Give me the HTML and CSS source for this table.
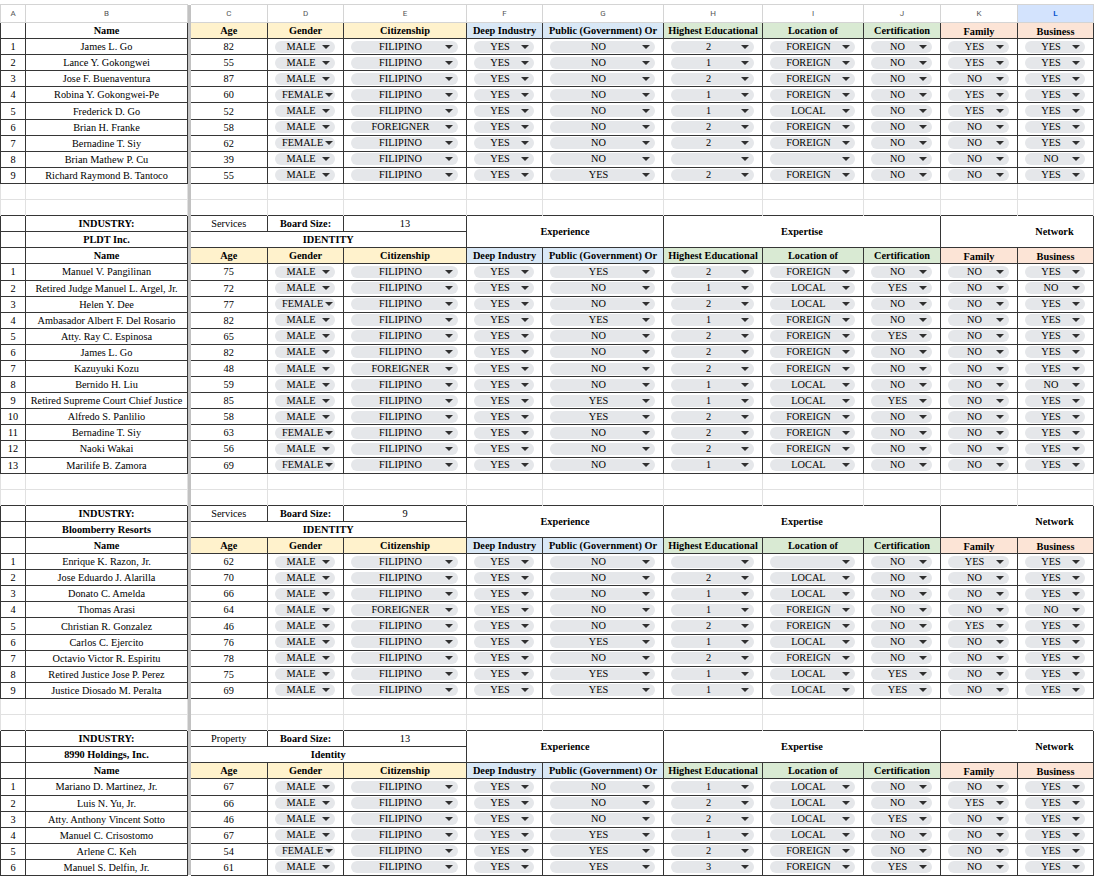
FILE: index.html
```html
<!DOCTYPE html>
<html>
<head>
<meta charset="utf-8">
<title>Board Composition</title>
<link rel="stylesheet" href="styles.css">
</head>
<body>
<table class="sheet">
<colgroup>
<col class="w-a"><col class="w-b"><col class="w-fz"><col class="w-c"><col class="w-d"><col class="w-e"><col class="w-f"><col class="w-g"><col class="w-h"><col class="w-i"><col class="w-j"><col class="w-k"><col class="w-l">
</colgroup>
<thead>
<tr class="letters"><th>A</th><th>B</th><th class="fz"></th><th>C</th><th>D</th><th>E</th><th>F</th><th>G</th><th>H</th><th>I</th><th>J</th><th>K</th><th class="sel">L</th></tr>
</thead>
<tbody>
<tr class="hd"><td></td><td class="b">Name</td><td class="fz"></td><td class="y">Age</td><td class="y">Gender</td><td class="y">Citizenship</td><td class="bl">Deep Industry</td><td class="bl">Public (Government) Or</td><td class="g">Highest Educational</td><td class="g">Location of</td><td class="g">Certification</td><td class="o">Family</td><td class="o">Business</td></tr>
<tr><td>1</td><td>James L. Go</td><td class="fz"></td><td>82</td><td><p>MALE</p></td><td><p>FILIPINO</p></td><td><p>YES</p></td><td><p>NO</p></td><td><p>2</p></td><td><p>FOREIGN</p></td><td><p>NO</p></td><td><p>YES</p></td><td><p>YES</p></td></tr>
<tr><td>2</td><td>Lance Y. Gokongwei</td><td class="fz"></td><td>55</td><td><p>MALE</p></td><td><p>FILIPINO</p></td><td><p>YES</p></td><td><p>NO</p></td><td><p>1</p></td><td><p>FOREIGN</p></td><td><p>NO</p></td><td><p>YES</p></td><td><p>YES</p></td></tr>
<tr><td>3</td><td>Jose F. Buenaventura</td><td class="fz"></td><td>87</td><td><p>MALE</p></td><td><p>FILIPINO</p></td><td><p>YES</p></td><td><p>NO</p></td><td><p>2</p></td><td><p>FOREIGN</p></td><td><p>NO</p></td><td><p>NO</p></td><td><p>YES</p></td></tr>
<tr><td>4</td><td>Robina Y. Gokongwei-Pe</td><td class="fz"></td><td>60</td><td><p>FEMALE</p></td><td><p>FILIPINO</p></td><td><p>YES</p></td><td><p>NO</p></td><td><p>1</p></td><td><p>FOREIGN</p></td><td><p>NO</p></td><td><p>YES</p></td><td><p>YES</p></td></tr>
<tr><td>5</td><td>Frederick D. Go</td><td class="fz"></td><td>52</td><td><p>MALE</p></td><td><p>FILIPINO</p></td><td><p>YES</p></td><td><p>NO</p></td><td><p>1</p></td><td><p>LOCAL</p></td><td><p>NO</p></td><td><p>YES</p></td><td><p>YES</p></td></tr>
<tr><td>6</td><td>Brian H. Franke</td><td class="fz"></td><td>58</td><td><p>MALE</p></td><td><p>FOREIGNER</p></td><td><p>YES</p></td><td><p>NO</p></td><td><p>2</p></td><td><p>FOREIGN</p></td><td><p>NO</p></td><td><p>NO</p></td><td><p>YES</p></td></tr>
<tr><td>7</td><td>Bernadine T. Siy</td><td class="fz"></td><td>62</td><td><p>FEMALE</p></td><td><p>FILIPINO</p></td><td><p>YES</p></td><td><p>NO</p></td><td><p>2</p></td><td><p>FOREIGN</p></td><td><p>NO</p></td><td><p>NO</p></td><td><p>YES</p></td></tr>
<tr><td>8</td><td>Brian Mathew P. Cu</td><td class="fz"></td><td>39</td><td><p>MALE</p></td><td><p>FILIPINO</p></td><td><p>YES</p></td><td><p>NO</p></td><td><p></p></td><td><p></p></td><td><p>NO</p></td><td><p>NO</p></td><td><p>NO</p></td></tr>
<tr><td>9</td><td>Richard Raymond B. Tantoco</td><td class="fz"></td><td>55</td><td><p>MALE</p></td><td><p>FILIPINO</p></td><td><p>YES</p></td><td><p>YES</p></td><td><p>2</p></td><td><p>FOREIGN</p></td><td><p>NO</p></td><td><p>NO</p></td><td><p>YES</p></td></tr>
<tr class="gap gap1"><td></td><td></td><td class="fz"></td><td></td><td></td><td></td><td></td><td></td><td></td><td></td><td></td><td></td><td></td></tr>
<tr class="gap gap2"><td></td><td></td><td class="fz"></td><td></td><td></td><td></td><td></td><td></td><td></td><td></td><td></td><td></td><td></td></tr>

<tr><td></td><td class="b">INDUSTRY:</td><td class="fz"></td><td>Services</td><td class="b">Board Size:</td><td>13</td><td class="b" colspan="2" rowspan="2">Experience</td><td class="b" colspan="3" rowspan="2">Expertise</td><td class="b net" colspan="2" rowspan="2">Network</td></tr>
<tr><td></td><td class="b">PLDT Inc.</td><td class="fz"></td><td class="b" colspan="3">IDENTITY</td></tr>
<tr class="hd"><td></td><td class="b">Name</td><td class="fz"></td><td class="y">Age</td><td class="y">Gender</td><td class="y">Citizenship</td><td class="bl">Deep Industry</td><td class="bl">Public (Government) Or</td><td class="g">Highest Educational</td><td class="g">Location of</td><td class="g">Certification</td><td class="o">Family</td><td class="o">Business</td></tr>
<tr><td>1</td><td>Manuel V. Pangilinan</td><td class="fz"></td><td>75</td><td><p>MALE</p></td><td><p>FILIPINO</p></td><td><p>YES</p></td><td><p>YES</p></td><td><p>2</p></td><td><p>FOREIGN</p></td><td><p>NO</p></td><td><p>NO</p></td><td><p>YES</p></td></tr>
<tr><td>2</td><td>Retired Judge Manuel L. Argel, Jr.</td><td class="fz"></td><td>72</td><td><p>MALE</p></td><td><p>FILIPINO</p></td><td><p>YES</p></td><td><p>NO</p></td><td><p>1</p></td><td><p>LOCAL</p></td><td><p>YES</p></td><td><p>NO</p></td><td><p>NO</p></td></tr>
<tr><td>3</td><td>Helen Y. Dee</td><td class="fz"></td><td>77</td><td><p>FEMALE</p></td><td><p>FILIPINO</p></td><td><p>YES</p></td><td><p>NO</p></td><td><p>2</p></td><td><p>LOCAL</p></td><td><p>NO</p></td><td><p>NO</p></td><td><p>YES</p></td></tr>
<tr><td>4</td><td>Ambasador Albert F. Del Rosario</td><td class="fz"></td><td>82</td><td><p>MALE</p></td><td><p>FILIPINO</p></td><td><p>YES</p></td><td><p>YES</p></td><td><p>1</p></td><td><p>FOREIGN</p></td><td><p>NO</p></td><td><p>NO</p></td><td><p>YES</p></td></tr>
<tr><td>5</td><td>Atty. Ray C. Espinosa</td><td class="fz"></td><td>65</td><td><p>MALE</p></td><td><p>FILIPINO</p></td><td><p>YES</p></td><td><p>NO</p></td><td><p>2</p></td><td><p>FOREIGN</p></td><td><p>YES</p></td><td><p>NO</p></td><td><p>YES</p></td></tr>
<tr><td>6</td><td>James L. Go</td><td class="fz"></td><td>82</td><td><p>MALE</p></td><td><p>FILIPINO</p></td><td><p>YES</p></td><td><p>NO</p></td><td><p>2</p></td><td><p>FOREIGN</p></td><td><p>NO</p></td><td><p>NO</p></td><td><p>YES</p></td></tr>
<tr><td>7</td><td>Kazuyuki Kozu</td><td class="fz"></td><td>48</td><td><p>MALE</p></td><td><p>FOREIGNER</p></td><td><p>YES</p></td><td><p>NO</p></td><td><p>2</p></td><td><p>FOREIGN</p></td><td><p>NO</p></td><td><p>NO</p></td><td><p>YES</p></td></tr>
<tr><td>8</td><td>Bernido H. Liu</td><td class="fz"></td><td>59</td><td><p>MALE</p></td><td><p>FILIPINO</p></td><td><p>YES</p></td><td><p>NO</p></td><td><p>1</p></td><td><p>LOCAL</p></td><td><p>NO</p></td><td><p>NO</p></td><td><p>NO</p></td></tr>
<tr><td>9</td><td>Retired Supreme Court Chief Justice</td><td class="fz"></td><td>85</td><td><p>MALE</p></td><td><p>FILIPINO</p></td><td><p>YES</p></td><td><p>YES</p></td><td><p>1</p></td><td><p>LOCAL</p></td><td><p>YES</p></td><td><p>NO</p></td><td><p>YES</p></td></tr>
<tr><td>10</td><td>Alfredo S. Panlilio</td><td class="fz"></td><td>58</td><td><p>MALE</p></td><td><p>FILIPINO</p></td><td><p>YES</p></td><td><p>YES</p></td><td><p>2</p></td><td><p>FOREIGN</p></td><td><p>NO</p></td><td><p>NO</p></td><td><p>YES</p></td></tr>
<tr><td>11</td><td>Bernadine T. Siy</td><td class="fz"></td><td>63</td><td><p>FEMALE</p></td><td><p>FILIPINO</p></td><td><p>YES</p></td><td><p>NO</p></td><td><p>2</p></td><td><p>FOREIGN</p></td><td><p>NO</p></td><td><p>NO</p></td><td><p>YES</p></td></tr>
<tr><td>12</td><td>Naoki Wakai</td><td class="fz"></td><td>56</td><td><p>MALE</p></td><td><p>FILIPINO</p></td><td><p>YES</p></td><td><p>NO</p></td><td><p>2</p></td><td><p>FOREIGN</p></td><td><p>NO</p></td><td><p>NO</p></td><td><p>YES</p></td></tr>
<tr><td>13</td><td>Marilife B. Zamora</td><td class="fz"></td><td>69</td><td><p>FEMALE</p></td><td><p>FILIPINO</p></td><td><p>YES</p></td><td><p>NO</p></td><td><p>1</p></td><td><p>LOCAL</p></td><td><p>NO</p></td><td><p>NO</p></td><td><p>YES</p></td></tr>
<tr class="gap gap1"><td></td><td></td><td class="fz"></td><td></td><td></td><td></td><td></td><td></td><td></td><td></td><td></td><td></td><td></td></tr>
<tr class="gap gap2"><td></td><td></td><td class="fz"></td><td></td><td></td><td></td><td></td><td></td><td></td><td></td><td></td><td></td><td></td></tr>

<tr><td></td><td class="b">INDUSTRY:</td><td class="fz"></td><td>Services</td><td class="b">Board Size:</td><td>9</td><td class="b" colspan="2" rowspan="2">Experience</td><td class="b" colspan="3" rowspan="2">Expertise</td><td class="b net" colspan="2" rowspan="2">Network</td></tr>
<tr><td></td><td class="b">Bloomberry Resorts</td><td class="fz"></td><td class="b" colspan="3">IDENTITY</td></tr>
<tr class="hd"><td></td><td class="b">Name</td><td class="fz"></td><td class="y">Age</td><td class="y">Gender</td><td class="y">Citizenship</td><td class="bl">Deep Industry</td><td class="bl">Public (Government) Or</td><td class="g">Highest Educational</td><td class="g">Location of</td><td class="g">Certification</td><td class="o">Family</td><td class="o">Business</td></tr>
<tr><td>1</td><td>Enrique K. Razon, Jr.</td><td class="fz"></td><td>62</td><td><p>MALE</p></td><td><p>FILIPINO</p></td><td><p>YES</p></td><td><p>NO</p></td><td><p></p></td><td><p></p></td><td><p>NO</p></td><td><p>YES</p></td><td><p>YES</p></td></tr>
<tr><td>2</td><td>Jose Eduardo J. Alarilla</td><td class="fz"></td><td>70</td><td><p>MALE</p></td><td><p>FILIPINO</p></td><td><p>YES</p></td><td><p>NO</p></td><td><p>2</p></td><td><p>LOCAL</p></td><td><p>NO</p></td><td><p>NO</p></td><td><p>YES</p></td></tr>
<tr><td>3</td><td>Donato C. Amelda</td><td class="fz"></td><td>66</td><td><p>MALE</p></td><td><p>FILIPINO</p></td><td><p>YES</p></td><td><p>NO</p></td><td><p>1</p></td><td><p>LOCAL</p></td><td><p>NO</p></td><td><p>NO</p></td><td><p>YES</p></td></tr>
<tr><td>4</td><td>Thomas Arasi</td><td class="fz"></td><td>64</td><td><p>MALE</p></td><td><p>FOREIGNER</p></td><td><p>YES</p></td><td><p>NO</p></td><td><p>1</p></td><td><p>FOREIGN</p></td><td><p>NO</p></td><td><p>NO</p></td><td><p>NO</p></td></tr>
<tr><td>5</td><td>Christian R. Gonzalez</td><td class="fz"></td><td>46</td><td><p>MALE</p></td><td><p>FILIPINO</p></td><td><p>YES</p></td><td><p>NO</p></td><td><p>2</p></td><td><p>FOREIGN</p></td><td><p>NO</p></td><td><p>YES</p></td><td><p>YES</p></td></tr>
<tr><td>6</td><td>Carlos C. Ejercito</td><td class="fz"></td><td>76</td><td><p>MALE</p></td><td><p>FILIPINO</p></td><td><p>YES</p></td><td><p>YES</p></td><td><p>1</p></td><td><p>LOCAL</p></td><td><p>NO</p></td><td><p>NO</p></td><td><p>YES</p></td></tr>
<tr><td>7</td><td>Octavio Victor R. Espiritu</td><td class="fz"></td><td>78</td><td><p>MALE</p></td><td><p>FILIPINO</p></td><td><p>YES</p></td><td><p>NO</p></td><td><p>2</p></td><td><p>FOREIGN</p></td><td><p>NO</p></td><td><p>NO</p></td><td><p>YES</p></td></tr>
<tr><td>8</td><td>Retired Justice Jose P. Perez</td><td class="fz"></td><td>75</td><td><p>MALE</p></td><td><p>FILIPINO</p></td><td><p>YES</p></td><td><p>YES</p></td><td><p>1</p></td><td><p>LOCAL</p></td><td><p>YES</p></td><td><p>NO</p></td><td><p>YES</p></td></tr>
<tr><td>9</td><td>Justice Diosado M. Peralta</td><td class="fz"></td><td>69</td><td><p>MALE</p></td><td><p>FILIPINO</p></td><td><p>YES</p></td><td><p>YES</p></td><td><p>1</p></td><td><p>LOCAL</p></td><td><p>YES</p></td><td><p>NO</p></td><td><p>YES</p></td></tr>
<tr class="gap gap1"><td></td><td></td><td class="fz"></td><td></td><td></td><td></td><td></td><td></td><td></td><td></td><td></td><td></td><td></td></tr>
<tr class="gap gap2"><td></td><td></td><td class="fz"></td><td></td><td></td><td></td><td></td><td></td><td></td><td></td><td></td><td></td><td></td></tr>

<tr><td></td><td class="b">INDUSTRY:</td><td class="fz"></td><td>Property</td><td class="b">Board Size:</td><td>13</td><td class="b" colspan="2" rowspan="2">Experience</td><td class="b" colspan="3" rowspan="2">Expertise</td><td class="b net" colspan="2" rowspan="2">Network</td></tr>
<tr><td></td><td class="b">8990 Holdings, Inc.</td><td class="fz"></td><td class="b" colspan="3">Identity</td></tr>
<tr class="hd"><td></td><td class="b">Name</td><td class="fz"></td><td class="y">Age</td><td class="y">Gender</td><td class="y">Citizenship</td><td class="bl">Deep Industry</td><td class="bl">Public (Government) Or</td><td class="g">Highest Educational</td><td class="g">Location of</td><td class="g">Certification</td><td class="o">Family</td><td class="o">Business</td></tr>
<tr><td>1</td><td>Mariano D. Martinez, Jr.</td><td class="fz"></td><td>67</td><td><p>MALE</p></td><td><p>FILIPINO</p></td><td><p>YES</p></td><td><p>NO</p></td><td><p>1</p></td><td><p>LOCAL</p></td><td><p>NO</p></td><td><p>NO</p></td><td><p>YES</p></td></tr>
<tr><td>2</td><td>Luis N. Yu, Jr.</td><td class="fz"></td><td>66</td><td><p>MALE</p></td><td><p>FILIPINO</p></td><td><p>YES</p></td><td><p>NO</p></td><td><p>2</p></td><td><p>LOCAL</p></td><td><p>NO</p></td><td><p>YES</p></td><td><p>YES</p></td></tr>
<tr><td>3</td><td>Atty. Anthony Vincent Sotto</td><td class="fz"></td><td>46</td><td><p>MALE</p></td><td><p>FILIPINO</p></td><td><p>YES</p></td><td><p>NO</p></td><td><p>2</p></td><td><p>LOCAL</p></td><td><p>YES</p></td><td><p>NO</p></td><td><p>YES</p></td></tr>
<tr><td>4</td><td>Manuel C. Crisostomo</td><td class="fz"></td><td>67</td><td><p>MALE</p></td><td><p>FILIPINO</p></td><td><p>YES</p></td><td><p>YES</p></td><td><p>1</p></td><td><p>LOCAL</p></td><td><p>NO</p></td><td><p>NO</p></td><td><p>YES</p></td></tr>
<tr><td>5</td><td>Arlene C. Keh</td><td class="fz"></td><td>54</td><td><p>FEMALE</p></td><td><p>FILIPINO</p></td><td><p>YES</p></td><td><p>YES</p></td><td><p>2</p></td><td><p>FOREIGN</p></td><td><p>NO</p></td><td><p>NO</p></td><td><p>YES</p></td></tr>
<tr><td>6</td><td>Manuel S. Delfin, Jr.</td><td class="fz"></td><td>61</td><td><p>MALE</p></td><td><p>FILIPINO</p></td><td><p>YES</p></td><td><p>YES</p></td><td><p>3</p></td><td><p>FOREIGN</p></td><td><p>YES</p></td><td><p>NO</p></td><td><p>YES</p></td></tr>
</tbody>
</table>
</body>
</html>
```
FILE: styles.css
```css
* { box-sizing: border-box; }
html, body { margin: 0; background: #fff; }
body {
  font-family: "Liberation Serif", "Times New Roman", serif;
  font-size: 10.3px;
  line-height: 13px;
  color: #000;
  overflow: hidden;
}
.sheet {
  border-collapse: collapse;
  table-layout: fixed;
  width: 1093px;
  margin-top: 4px;
}
.w-a { width: 25px; }
.w-b { width: 162px; }
.w-fz { width: 3px; }
.w-c { width: 77px; }
.w-d { width: 76px; }
.w-e { width: 123px; }
.w-f { width: 76px; }
.w-g { width: 121px; }
.w-h { width: 99px; }
.w-i { width: 101px; }
.w-j { width: 77px; }
.w-k { width: 77px; }
.w-l { width: 76px; }

.sheet tbody tr { height: 16.1px; }
.sheet td {
  border: 1px solid #363636;
  padding: 0 1px;
  text-align: center;
  vertical-align: middle;
  white-space: nowrap;
  overflow: hidden;
}
.letters th {
  height: 18px;
  padding: 0;
  font-family: Roboto, "Liberation Sans", sans-serif;
  font-size: 8px;
  font-weight: 400;
  line-height: 10px;
  color: #555;
  background: #fff;
  border: 1px solid #d4d4d4;
  text-align: center;
  vertical-align: middle;
}
.letters th.sel {
  background: #d3e3fd;
  color: #0b57d0;
  font-weight: 700;
}
.sheet td.fz, .letters th.fz {
  background: #c2c2c2;
  padding: 0;
  border-left: none;
  border-right: hidden;
  border-top: hidden;
  border-bottom: hidden;
}
.sheet tr.gap td { border-color: #e1e1e1; }
.sheet tr.gap1 td { border-top: none; }
.sheet tr.gap2 td { border-bottom: none; }

.b { font-weight: 700; }
.hd td { font-weight: 700; }
.sheet td.y { background: #fff2cc; }
.sheet td.bl { background: #d9e8f6; }
.sheet td.g { background: #d9ead3; }
.sheet td.o { background: #fce4d6; vertical-align: bottom; }
.sheet td.net { padding-left: 76px; }

.sheet td p {
  margin: 0 7px 0 6px;
  height: 12px;
  border-radius: 6px;
  background: #e5e7ea;
  display: grid;
  grid-template-columns: 1fr 8px;
  column-gap: 2px;
  align-items: center;
  padding: 0 5px 0 7px;
  line-height: 12px;
  text-align: center;
  overflow: hidden;
  white-space: nowrap;
}
.sheet td p::after {
  content: "";
  grid-column: 2;
  justify-self: center;
  width: 0;
  height: 0;
  border-left: 4px solid transparent;
  border-right: 4px solid transparent;
  border-top: 4px solid #303030;
}
```
